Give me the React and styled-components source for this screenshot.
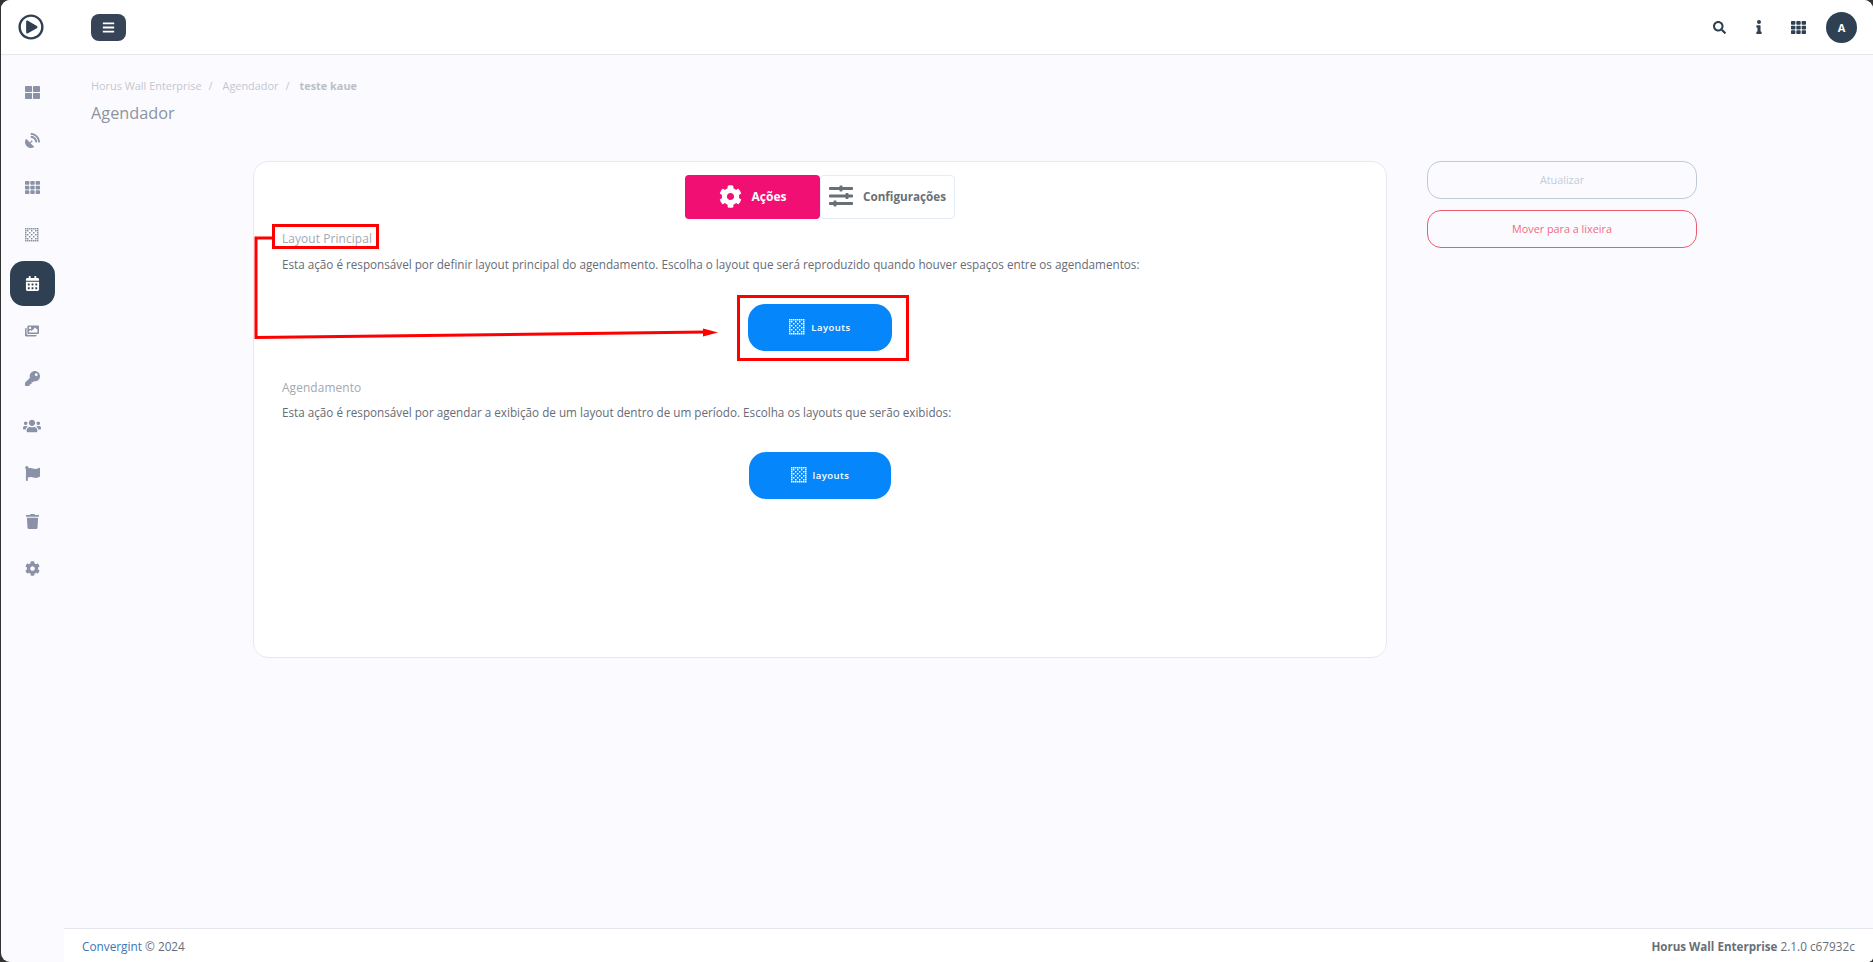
import React from 'react';
import styled, { createGlobalStyle } from 'styled-components';
import { FaThLarge, FaSatelliteDish, FaTh, FaCalendarAlt, FaImages, FaKey, FaUsers, FaFlag, FaTrash, FaCog, FaSearch, FaInfo, FaBars, FaRegPlayCircle, FaSlidersH } from 'react-icons/fa';

const Global = createGlobalStyle`
  html, body { margin: 0; padding: 0; height: 100%; background: #333; overflow: hidden; }
  #root { height: 100%; }
  * { box-sizing: border-box; }
`;
const Shell = styled.div`
  position: relative; width: 1872px; height: 962px; margin-left: 1px; border-radius: 9px 9px 5px 9px; overflow: hidden;
  background: #fbfbff; display: flex; flex-direction: column; font-family: "Open Sans", sans-serif; color: #5f6a76;
`;
const Header = styled.header`
  height: 55px; flex: none; background: #fff; border-bottom: 1px solid #e6e7ee; display: flex; align-items: center; padding-right: 16px;
`;
const LogoCell = styled.div`width: 59px; display: flex; justify-content: center; color: #2f4053; font-size: 26px; line-height: 0;`;
const MenuButton = styled.button`
  margin-left: 31px; width: 35px; height: 27px; border: 0; border-radius: 8px; background: #374357; color: #fff; font-size: 13px;
  display: flex; align-items: center; justify-content: center; padding: 0;
`;
const HeaderTools = styled.div`margin-left: auto; display: flex; align-items: center; color: #2f4053;`;
const ToolIcon = styled.span`display: flex; width: ${p => p.$w}px; justify-content: center; font-size: ${p => p.$s}px;`;
const Avatar = styled.div`
  width: 31px; height: 31px; margin-left: 9px; border-radius: 50%; background: #2f4053; color: #fff; font-size: 11px; font-weight: 700;
  display: flex; align-items: center; justify-content: center;
`;
const Body = styled.div`flex: 1; display: flex; min-height: 0;`;
const Sidebar = styled.nav`width: 63px; flex: none; display: flex; flex-direction: column; align-items: center; padding: 15px 1px 0 0;`;
const SideItem = styled.div`
  width: 45px; height: 45px; margin-bottom: 2.65px; display: flex; align-items: center; justify-content: center; font-size: ${p => p.$s || 15}px; border-radius: 14px;
  color: ${p => p.$active ? '#fff' : '#8b92a8'}; background: ${p => p.$active ? '#2f4053' : 'transparent'};
`;
const Main = styled.main`flex: 1; display: flex; flex-direction: column; min-width: 0;`;
const Content = styled.div`flex: 1; padding: 22px 0 0 27px;`;
const Crumbs = styled.div`display: flex; font-size: 10.9px; line-height: 18px; color: #c4c6ce;`;
const CrumbSep = styled.span`margin: 0 10px 0 7px;`;
const CrumbLast = styled.b`font-weight: 700; color: #bcbfc8;`;
const Title = styled.h1`margin: 7px 0 0; font-size: 16.3px; line-height: 22px; font-weight: 400; color: #8d939e;`;
const Columns = styled.div`display: flex; gap: 40px; margin: 37px 0 0 162px; align-items: flex-start;`;
const Card = styled.section`
  width: 1134px; height: 497px; background: #fff; border: 1px solid #e6e9f2; border-radius: 15px; padding: 13px 28px 0;
`;
const Tabs = styled.div`display: flex; justify-content: center; margin-bottom: 10px;`;
const Tab = styled.div`
  width: 135px; height: 44px; display: flex; align-items: center; justify-content: center; gap: 10px; font-size: ${p => p.$active ? 12 : 11.7}px; font-weight: 700;
  padding-bottom: 2px; border-radius: 4px; ${p => p.$active ? 'background: #f20f73; color: #fff;' : 'background: #fff; color: #6a6f76; border: 1px solid #e4edf7;'}
`;
const TabIcon = styled.span`display: flex; font-size: ${p => p.$s}px;`;
const SectionTitle = styled.h2`margin: 0; font-size: 11.9px; line-height: 18px; font-weight: 400; color: #a3a8b2; letter-spacing: .1px;`;
const SectionText = styled.p`margin: ${p => p.$top}px 0 0; font-size: 11.7px; line-height: 18px; color: #666c76;`;
const ActionRow = styled.div`display: flex; justify-content: center; margin: ${p => p.$top}px 0 ${p => p.$bottom}px;`;
const ActionButton = styled.button`
  width: ${p => p.$w}px; height: 47px; border: 0; border-radius: 17px; background: #0587fb; color: #fff; display: flex; align-items: center; justify-content: center;
  gap: 6px; font-family: inherit; font-size: 9.5px; font-weight: 600; letter-spacing: .5px; padding: 0 0 1px;
`;
const Side = styled.aside`width: 270px; display: flex; flex-direction: column; gap: 11px;`;
const SideButton = styled.button`
  height: 38px; border-radius: 14px; background: transparent; font-family: inherit; font-size: 10.8px; padding-bottom: 2px;
  border: 1px solid ${p => p.$danger ? '#ee5a6e' : '#bccada'}; color: ${p => p.$danger ? '#f4697f' : '#c3ccd8'};
`;
const Footer = styled.footer`
  height: 34px; flex: none; background: #fff; border-top: 1px solid #e6e7ee; display: flex; justify-content: space-between; align-items: center;
  padding: 0 18px 0 18px; font-size: 11.8px; color: #686e78;
`;
const FootLink = styled.span`color: #3a76b4;`;
const FootProduct = styled.b`font-size: 11.6px;`;
const Overlay = styled.svg`position: absolute; left: -1px; top: 0; width: 1873px; height: 962px; pointer-events: none;`;

const DotGrid = ({ cols = 8 }) => {
  const cells = [];
  for (let y = 0; y < cols; y++) for (let x = 0; x < cols; x++) {
    const edge = x === 0 || y === 0 || x === cols - 1 || y === cols - 1;
    if (edge || (x + y) % 2 === 0) cells.push(<rect key={x + '-' + y} x={x * 2} y={y * 2} width="1.5" height="1.5" />);
  }
  const size = cols * 2;
  return <svg width={size} height={size} viewBox={`0 0 ${size} ${size}`} fill="currentColor">{cells}</svg>;
};

const sideIcons = [
  { icon: <FaThLarge /> }, { icon: <FaSatelliteDish /> }, { icon: <FaTh /> }, { icon: <DotGrid cols={7} /> },
  { icon: <FaCalendarAlt /> }, { icon: <FaImages />, s: 14 }, { icon: <FaKey /> }, { icon: <FaUsers />, s: 18 },
  { icon: <FaFlag /> }, { icon: <FaTrash /> }, { icon: <FaCog /> },
];

export default function App() {
  return (
    <>
      <Global />
      <Shell>
        <Header>
          <LogoCell><FaRegPlayCircle /></LogoCell>
          <MenuButton aria-label="menu"><FaBars /></MenuButton>
          <HeaderTools>
            <ToolIcon $w={40} $s={13}><FaSearch /></ToolIcon>
            <ToolIcon $w={40} $s={14}><FaInfo /></ToolIcon>
            <ToolIcon $w={38} $s={15}><FaTh /></ToolIcon>
            <Avatar>A</Avatar>
          </HeaderTools>
        </Header>
        <Body>
          <Sidebar>
            {sideIcons.map((item, i) => <SideItem key={i} $s={item.s} $active={i === 4}>{item.icon}</SideItem>)}
          </Sidebar>
          <Main>
            <Content>
              <Crumbs>
                <span>Horus Wall Enterprise</span><CrumbSep>/</CrumbSep>
                <span>Agendador</span><CrumbSep>/</CrumbSep>
                <CrumbLast>teste kaue</CrumbLast>
              </Crumbs>
              <Title>Agendador</Title>
              <Columns>
                <Card>
                  <Tabs>
                    <Tab $active><TabIcon $s={23}><FaCog /></TabIcon>Ações</Tab>
                    <Tab><TabIcon $s={24}><FaSlidersH /></TabIcon>Configurações</Tab>
                  </Tabs>
                  <SectionTitle>Layout Principal</SectionTitle>
                  <SectionText $top={8}>Esta ação é responsável por definir layout principal do agendamento. Escolha o layout que será reproduzido quando houver espaços entre os agendamentos:</SectionText>
                  <ActionRow $top={31} $bottom={27}>
                    <ActionButton $w={144}><DotGrid />Layouts</ActionButton>
                  </ActionRow>
                  <SectionTitle>Agendamento</SectionTitle>
                  <SectionText $top={7}>Esta ação é responsável por agendar a exibição de um layout dentro de um período. Escolha os layouts que serão exibidos:</SectionText>
                  <ActionRow $top={31} $bottom={0}>
                    <ActionButton $w={142}><DotGrid />layouts</ActionButton>
                  </ActionRow>
                </Card>
                <Side>
                  <SideButton>Atualizar</SideButton>
                  <SideButton $danger>Mover para a lixeira</SideButton>
                </Side>
              </Columns>
            </Content>
            <Footer>
              <span><FootLink>Convergint</FootLink> © 2024</span>
              <span><FootProduct>Horus Wall Enterprise</FootProduct> 2.1.0 c67932c</span>
            </Footer>
          </Main>
        </Body>
        <Overlay viewBox="0 0 1873 962" fill="none">
          <rect x="273.5" y="225.5" width="104" height="22" stroke="#f00" strokeWidth="3" />
          <rect x="738.5" y="296.5" width="169" height="63" stroke="#f00" strokeWidth="3" />
          <path d="M272 238H256V337.5L706 332" stroke="#f00" strokeWidth="3" />
          <path d="M718 332.5L703 328.5V336.5Z" fill="#f00" />
        </Overlay>
      </Shell>
    </>
  );
}
